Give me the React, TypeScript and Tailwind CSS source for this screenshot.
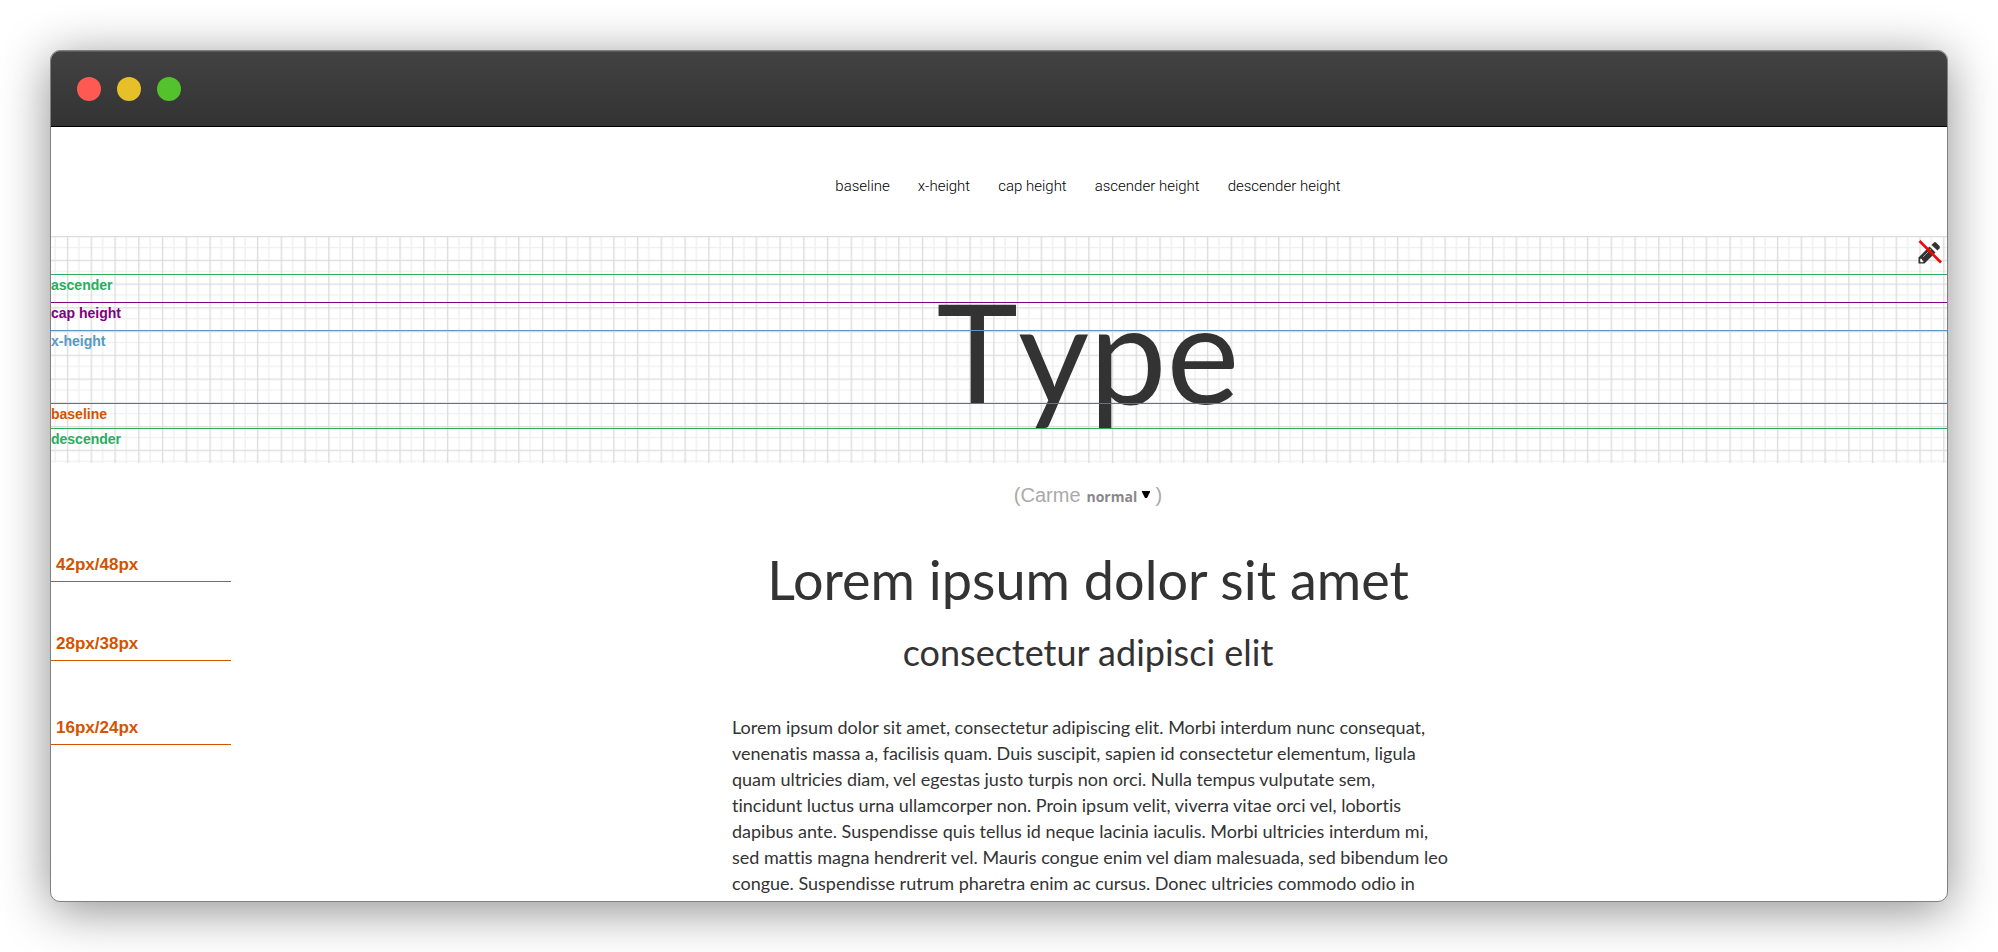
const navItems = ["baseline", "x-height", "cap height", "ascender height", "descender height"];

const lights = [
  { label: "Close", color: "bg-[#ff5a52]" },
  { label: "Minimize", color: "bg-[#e6c029]" },
  { label: "Zoom", color: "bg-[#54c22d]" },
];

const guides = [
  { name: "ascender", top: "top-[38px]", color: "border-[#27ae60] text-[#27ae60]" },
  { name: "cap height", top: "top-[66px]", color: "border-[#800080] text-[#800080]" },
  { name: "x-height", top: "top-[94px]", color: "border-[#5499c7] text-[#5499c7]" },
  { name: "baseline", top: "top-[167px]", color: "border-[#d35400] text-[#d35400]" },
  { name: "descender", top: "top-[192px]", color: "border-[#27ae60] text-[#27ae60]" },
];

const paragraph = `Lorem ipsum dolor sit amet, consectetur adipiscing elit. Morbi interdum nunc consequat,
venenatis massa a, facilisis quam. Duis suscipit, sapien id consectetur elementum, ligula
quam ultricies diam, vel egestas justo turpis non orci. Nulla tempus vulputate sem,
tincidunt luctus urna ullamcorper non. Proin ipsum velit, viverra vitae orci vel, lobortis
dapibus ante. Suspendisse quis tellus id neque lacinia iaculis. Morbi ultricies interdum mi,
sed mattis magna hendrerit vel. Mauris congue enim vel diam malesuada, sed bibendum leo
congue. Suspendisse rutrum pharetra enim ac cursus. Donec ultricies commodo odio in`;

function GridPaper() {
  return (
    <svg className="absolute inset-0 h-full w-full" aria-hidden="true">
      <defs>
        <pattern id="grid" x="15.9" y="0" width="23.75" height="23.75" patternUnits="userSpaceOnUse">
          <path d="M12 0V23.75M0 11.5H23.75" stroke="#f0f0f0" strokeWidth="1.4" />
          <path d="M0.7 0V23.75M0 0.6H23.75" stroke="#dcdcdc" strokeWidth="1.3" />
        </pattern>
      </defs>
      <rect width="100%" height="100%" fill="url(#grid)" />
    </svg>
  );
}

function PencilOff() {
  return (
    <svg viewBox="0 0 24 24" className="h-6 w-6" aria-hidden="true">
      <path d="M0.500 23.500V17.500L11.500 6.500l6 6L6.500 23.500z" fill="#333" />
      <path d="M13.500 5L16 2.500q1-.8 2 0l3.500 3.500q.8 1 0 2.200l-2 2.300z" fill="#333" />
      <path d="M2.500 18.500l1.300.5.500 1.500 1.500.5-1.300 1.300H3l-1-1z" fill="#fff" />
      <path d="M5 17l8-8" stroke="#bbb" strokeWidth=".8" />
      <path d="M1.500 1L23 22.500" stroke="#f00" strokeWidth="2.600" />
    </svg>
  );
}

function SizeLabel({ text }: { text: string }) {
  return (
    <div className="w-[180px] shrink-0 border-b border-[#d35400] pt-1 pb-1 pl-[5px] font-['Liberation_Sans',sans-serif] text-[17px] leading-6 font-bold text-[#d35400]">
      {text}
    </div>
  );
}

export default function App() {
  return (
    <div className="h-screen overflow-hidden bg-white p-[50px]">
      <div className="flex h-full flex-col overflow-hidden rounded-[10px] border border-[#808080] bg-white shadow-[0_8px_50px_rgba(0,0,0,0.45)]">
        <header className="flex h-[76px] shrink-0 items-center gap-4 border-b border-black bg-linear-to-b from-[#424242] to-[#333] px-[26px] shadow-[inset_0_1px_0_#5a5a5a]">
          {lights.map((l) => (
            <button key={l.label} aria-label={l.label} className={`h-6 w-6 rounded-full ${l.color}`} />
          ))}
        </header>
        <nav className="flex h-[109px] shrink-0 items-center justify-center gap-7 pt-[10px] pl-[178px] font-[Roboto,sans-serif] text-[15px] font-light text-black">
          {navItems.map((n) => (
            <a key={n} href={`#${n.replace(" ", "-")}`}>
              {n}
            </a>
          ))}
        </nav>
        <section className="relative h-[227px] shrink-0 pl-[178px] text-center">
          <GridPaper />
          <h1 className="relative pt-8 font-[Lato,sans-serif] text-[138px] leading-[166px] text-[#333] [font-kerning:none]">
            Type
          </h1>
          {guides.map((g) => (
            <div
              key={g.name}
              className={`absolute inset-x-0 border-t pt-0.5 text-left font-['Liberation_Sans',sans-serif] text-sm leading-4 font-bold ${g.top} ${g.color}`}
            >
              {g.name}
            </div>
          ))}
          <button aria-label="Hide guides" className="absolute top-1 right-[5px]">
            <PencilOff />
          </button>
        </section>
        <div className="flex shrink-0 items-baseline justify-center gap-1.5 pt-5 pl-[178px] font-['Liberation_Sans',sans-serif] text-xl leading-6 text-[#aaa]">
          <span>(Carme</span>
          <label className="flex items-baseline">
            <select
              aria-label="Font weight"
              className="w-[51px] appearance-none font-['Open_Sans',sans-serif] text-sm leading-5 font-bold text-[#888]"
            >
              <option>normal</option>
            </select>
            <svg viewBox="0 0 8 7" className="mt-1 ml-1 h-[7px] w-2 self-start" aria-hidden="true">
              <path d="M0 0H8V1L5 7H3L0 1z" fill="#000" />
            </svg>
          </label>
          <span>)</span>
        </div>
        <main className="flex min-h-0 flex-col pt-[42px] pr-0.5 font-[Lato,sans-serif] text-[#333] [font-variant-ligatures:none]">
          <div className="flex items-start">
            <SizeLabel text="42px/48px" />
            <h2 className="grow text-center text-[54px] leading-[62px]">Lorem ipsum dolor sit amet</h2>
          </div>
          <div className="flex items-start pt-[17px]">
            <SizeLabel text="28px/38px" />
            <h3 className="grow text-center text-[36px] leading-[48px]">consectetur adipisci elit</h3>
          </div>
          <div className="flex items-start pt-9">
            <SizeLabel text="16px/24px" />
            <div className="flex grow justify-center pt-0.5">
              <p className="w-[712px] text-lg leading-[26px] whitespace-pre">{paragraph}</p>
            </div>
          </div>
        </main>
      </div>
    </div>
  );
}
